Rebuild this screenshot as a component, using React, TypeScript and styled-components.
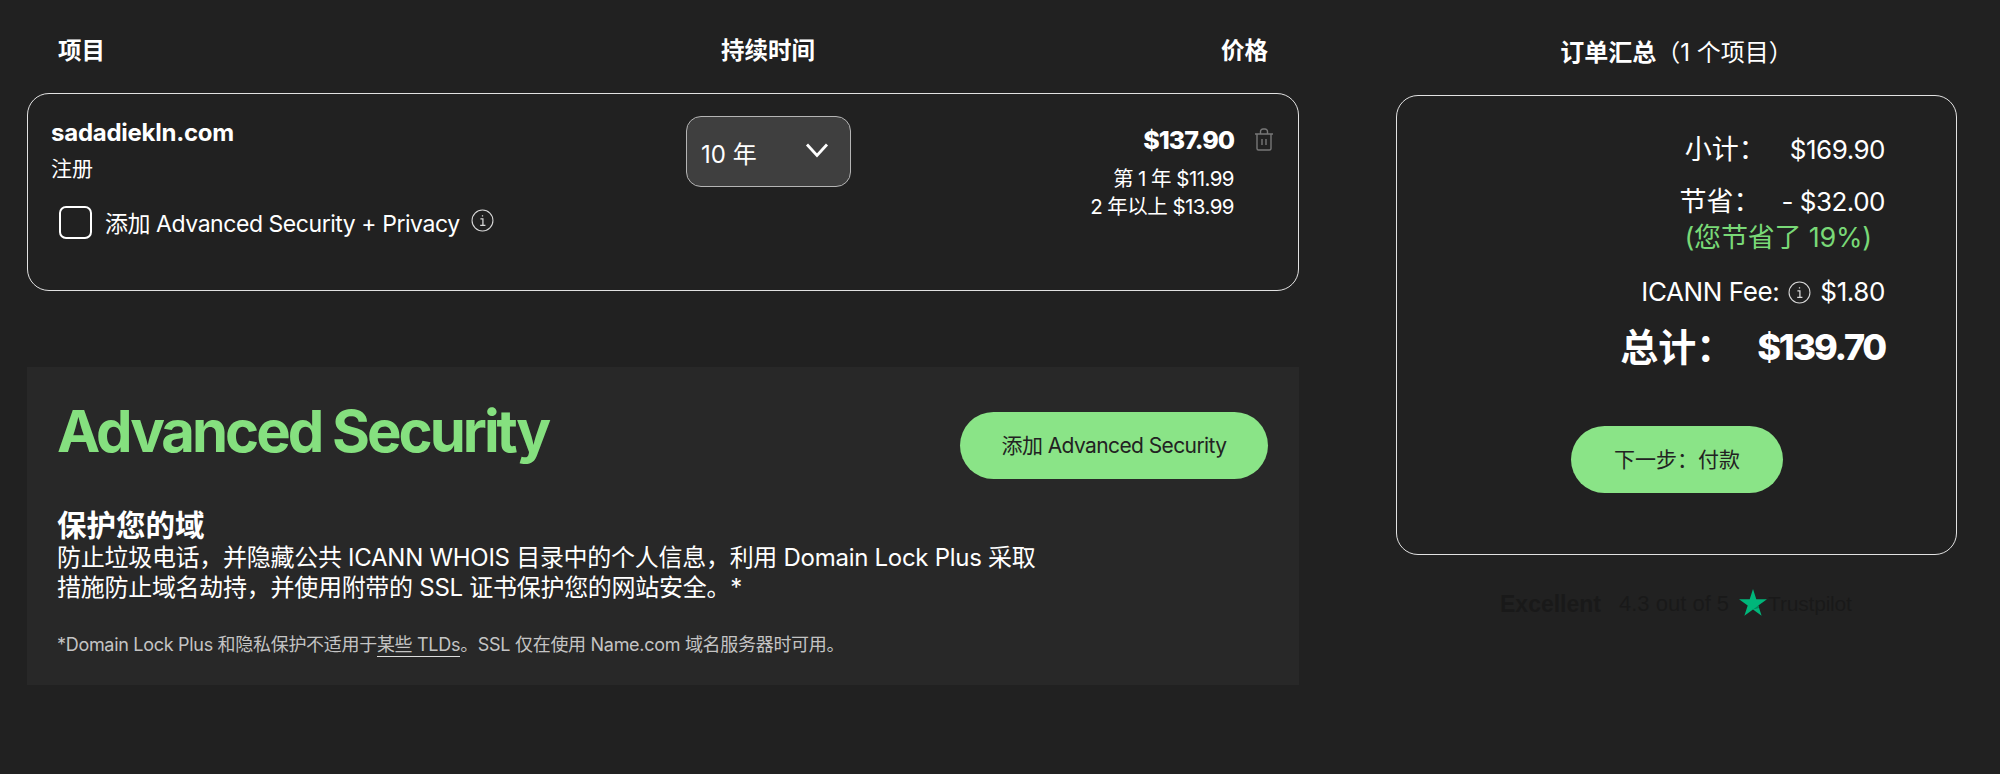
import React from 'react';
import styled, { createGlobalStyle } from 'styled-components';

const GlobalStyle = createGlobalStyle`
  html, body {
    margin: 0;
    padding: 0;
    background-color: #212121;
  }

  body {
    color: #fff;
    font-family: Inter, "Noto Sans CJK SC", sans-serif;
  }

  * {
    box-sizing: border-box;
  }
`;

const Page = styled.div`
  display: flex;
  gap: 97px;
  width: 2000px;
  height: 774px;
  padding: 0 43px 0 27px;
  overflow: hidden;
`;

const MainColumn = styled.main`
  width: 1272px;
  flex-shrink: 0;
`;

const SideColumn = styled.aside`
  flex: 1;
`;

const TableHeader = styled.div`
  display: flex;
  height: 93px;
  padding: 36px 31px 0;
  font-size: 23.5px;
  line-height: 30px;
  font-weight: 700;
`;

const ItemHeading = styled.div`
  width: 663px;
`;

const DurationHeading = styled.div`
  flex: 1;
`;

const ItemCard = styled.section`
  display: flex;
  height: 198px;
  padding: 22px 24px 0 23px;
  border: 1.5px solid #e2e2e2;
  border-radius: 22px;
`;

const ItemInfo = styled.div`
  width: 635px;
  flex-shrink: 0;
`;

const DomainName = styled.div`
  padding-top: 1px;
  font-size: 24px;
  line-height: 32px;
  font-weight: 700;
  letter-spacing: -0.25px;
`;

const ItemType = styled.div`
  margin-top: 6px;
  font-size: 21px;
  line-height: 28px;
`;

const AddOnRow = styled.label`
  display: flex;
  align-items: center;
  margin: 21px 0 0 8px;
  font-size: 23px;
  line-height: 34px;
  letter-spacing: -0.45px;
`;

const AddOnText = styled.span`
  padding-top: 3px;
`;

const CheckBox = styled.span`
  width: 33px;
  height: 33px;
  margin-right: 13px;
  border: 2.5px solid #fff;
  border-radius: 7px;
  flex-shrink: 0;
`;

const InfoIcon = styled.svg<{ $size: number }>`
  width: ${(p) => p.$size}px;
  height: ${(p) => p.$size}px;
  flex-shrink: 0;
`;

const AddOnInfo = styled(InfoIcon)`
  margin: -5px 0 0 11px;
`;

const DurationSelect = styled.div`
  display: flex;
  align-items: center;
  justify-content: space-between;
  width: 165px;
  height: 71px;
  padding: 2px 21px 0 14px;
  background-color: #3f3f3f;
  border: 1.5px solid #b5b5b5;
  border-radius: 15px;
  font-size: 24px;
`;

const Chevron = styled.svg`
  width: 24px;
  height: 16px;
  margin-top: -5px;
`;

const PriceBlock = styled.div`
  flex: 1;
  padding: 8px 0 0;
  text-align: right;
`;

const ItemPrice = styled.div`
  margin-bottom: 9px;
  font-size: 25px;
  line-height: 32px;
  font-weight: 800;
  letter-spacing: -1px;
`;

const PriceNote = styled.div`
  font-size: 20.5px;
  line-height: 28px;
  letter-spacing: -0.55px;
`;

const TrashButton = styled.svg`
  width: 20px;
  height: 23px;
  margin: 12px 0 0 20px;
  flex-shrink: 0;
`;

const PromoPanel = styled.section`
  height: 318px;
  margin-top: 76px;
  padding: 28px 31px 0 30px;
  background-color: #282828;
`;

const PromoTop = styled.div`
  display: flex;
  justify-content: space-between;
  align-items: flex-start;
`;

const PromoTitle = styled.h2`
  margin: 0;
  color: #85e07f;
  font-size: 58px;
  line-height: 72px;
  font-weight: 700;
  letter-spacing: -3px;
`;

const PillButton = styled.button<{ $width: number }>`
  display: block;
  width: ${(p) => p.$width}px;
  height: 67px;
  padding: 0 0 4px;
  background-color: #8ae487;
  border: 0;
  border-radius: 34px;
  color: #222;
  font-family: inherit;
  font-size: 21px;
`;

const PromoButton = styled(PillButton)`
  margin-top: 17px;
  letter-spacing: -0.6px;
`;

const PromoHeading = styled.h3`
  margin: 0;
  padding-top: 28px;
  font-size: 29.5px;
  line-height: 36px;
  font-weight: 700;
`;

const PromoText = styled.p`
  margin: 0;
  font-size: 24px;
  line-height: 30px;
  letter-spacing: -0.28px;
`;

const Footnote = styled.p`
  margin: 29px 0 0;
  color: #c4c4c4;
  font-size: 18px;
  line-height: 26px;
  letter-spacing: -0.3px;
`;

const FootnoteLink = styled.span`
  padding-bottom: 1px;
  border-bottom: 1px solid #ddd;
`;

const SummaryHeader = styled.div`
  height: 95px;
  padding-top: 38px;
  font-size: 24px;
  line-height: 30px;
  text-align: center;
`;

const SummaryLabel = styled.span`
  font-weight: 700;
`;

const SummaryCard = styled.section`
  height: 460px;
  padding: 35px 71px 0 0;
  border: 1.5px solid #e2e2e2;
  border-radius: 22px;
`;

const SummaryRow = styled.div<{ $gap: number; $top?: number }>`
  display: flex;
  justify-content: flex-end;
  align-items: center;
  gap: ${(p) => p.$gap}px;
  margin-top: ${(p) => p.$top ?? 0}px;
  font-size: 26px;
  line-height: 38px;
  letter-spacing: -0.5px;
`;

const RowName = styled.span`
  font-size: 27px;
  letter-spacing: 0;
`;

const SavedNote = styled.div`
  padding-right: 13px;
  color: #79d977;
  font-size: 27px;
  line-height: 34px;
  text-align: right;
  letter-spacing: -0.2px;
`;

const FeeRow = styled(SummaryRow)`
  letter-spacing: -0.4px;
`;

const TotalRow = styled(SummaryRow)`
  font-size: 36px;
  line-height: 48px;
  font-weight: 800;
  letter-spacing: -2.2px;
`;

const TotalName = styled.span`
  font-size: 38px;
  font-weight: 700;
  letter-spacing: 0;
`;

const CheckoutButton = styled(PillButton)`
  margin: 55px 0 0 174px;
`;

const TrustBar = styled.div`
  display: flex;
  align-items: center;
  height: 40px;
  margin-top: 29px;
  padding-left: 104px;
  color: #191919;
  font-family: "Liberation Sans", Arial, sans-serif;
  font-size: 22px;
`;

const TrustRating = styled.strong`
  margin-right: 18px;
  font-size: 23px;
`;

const TrustStar = styled.svg`
  width: 28px;
  height: 27px;
  margin: -4px 1px 0 10px;
`;

const TrustBrand = styled.span`
  font-size: 21px;
  letter-spacing: -0.2px;
`;

const Info: React.FC<{ size: number; as?: typeof InfoIcon }> = ({ size, as: Icon = InfoIcon }) => (
  <Icon $size={size} viewBox="0 0 22 22" fill="none" stroke="#d8d8d8">
    <circle cx="11" cy="11" r="10" strokeWidth="1" />
    <path d="M9 9.5h2.4v6.2M8.8 15.7h5M11 6v1.2" strokeWidth="1.2" />
  </Icon>
);

const App: React.FC = () => {
  return (
    <Page>
      <GlobalStyle />
      <MainColumn>
        <TableHeader>
          <ItemHeading>项目</ItemHeading>
          <DurationHeading>持续时间</DurationHeading>
          <div>价格</div>
        </TableHeader>

        <ItemCard>
          <ItemInfo>
            <DomainName>sadadiekln.com</DomainName>
            <ItemType>注册</ItemType>
            <AddOnRow>
              <CheckBox />
              <AddOnText>添加 Advanced Security + Privacy</AddOnText>
              <Info size={23} as={AddOnInfo} />
            </AddOnRow>
          </ItemInfo>
          <DurationSelect>
            10 年
            <Chevron viewBox="0 0 24 16" fill="none" stroke="#fff" strokeWidth="2.8">
              <path d="M2 2.5l10 11 10-11" />
            </Chevron>
          </DurationSelect>
          <PriceBlock>
            <ItemPrice>$137.90</ItemPrice>
            <PriceNote>第 1 年 $11.99</PriceNote>
            <PriceNote>2 年以上 $13.99</PriceNote>
          </PriceBlock>
          <TrashButton viewBox="0 0 20 23" fill="none" stroke="#777" strokeWidth="1.4">
            <path d="M1 6h18M3 6v14.5a1.5 1.5 0 0 0 1.5 1.5h11a1.5 1.5 0 0 0 1.5-1.5V6M6.5 6V3.5a2.5 2.5 0 0 1 2.5-2.5h2a2.5 2.5 0 0 1 2.5 2.5V6M8 11v6M12 11v6" />
          </TrashButton>
        </ItemCard>

        <PromoPanel>
          <PromoTop>
            <PromoTitle>Advanced Security</PromoTitle>
            <PromoButton $width={308}>添加 Advanced Security</PromoButton>
          </PromoTop>
          <PromoHeading>保护您的域</PromoHeading>
          <PromoText>
            防止垃圾电话，并隐藏公共 ICANN WHOIS 目录中的个人信息，利用 Domain Lock Plus 采取
            <br />
            措施防止域名劫持，并使用附带的 SSL 证书保护您的网站安全。*
          </PromoText>
          <Footnote>
            *Domain Lock Plus 和隐私保护不适用于<FootnoteLink>某些 TLDs</FootnoteLink>。SSL 仅在使用 Name.com 域名服务器时可用。
          </Footnote>
        </PromoPanel>
      </MainColumn>

      <SideColumn>
        <SummaryHeader>
          <SummaryLabel>订单汇总</SummaryLabel>（1 个项目）
        </SummaryHeader>
        <SummaryCard>
          <SummaryRow $gap={24}>
            <RowName>小计：</RowName>
            <span>$169.90</span>
          </SummaryRow>
          <SummaryRow $gap={21} $top={14}>
            <RowName>节省：</RowName>
            <span>- $32.00</span>
          </SummaryRow>
          <SavedNote>(您节省了 19%)</SavedNote>
          <FeeRow $gap={9} $top={18}>
            <span>ICANN Fee:</span>
            <Info size={23} />
            <span>$1.80</span>
          </FeeRow>
          <TotalRow $gap={23} $top={12}>
            <TotalName>总计：</TotalName>
            <span>$139.70</span>
          </TotalRow>
          <CheckoutButton $width={212}>下一步：付款</CheckoutButton>
        </SummaryCard>
        <TrustBar>
          <TrustRating>Excellent</TrustRating>
          4.3 out of 5
          <TrustStar viewBox="0 0 28 27">
            <path fill="#00b67a" d="M14 0l3.3 10.2H28l-8.7 6.3 3.3 10.3-8.6-6.3-8.6 6.3 3.3-10.3L0 10.2h10.7z" />
            <path fill="#00875a" d="M19.3 16.5l.8 2.6-6.1 1.4z" />
          </TrustStar>
          <TrustBrand>Trustpilot</TrustBrand>
        </TrustBar>
      </SideColumn>
    </Page>
  );
};

export default App;
